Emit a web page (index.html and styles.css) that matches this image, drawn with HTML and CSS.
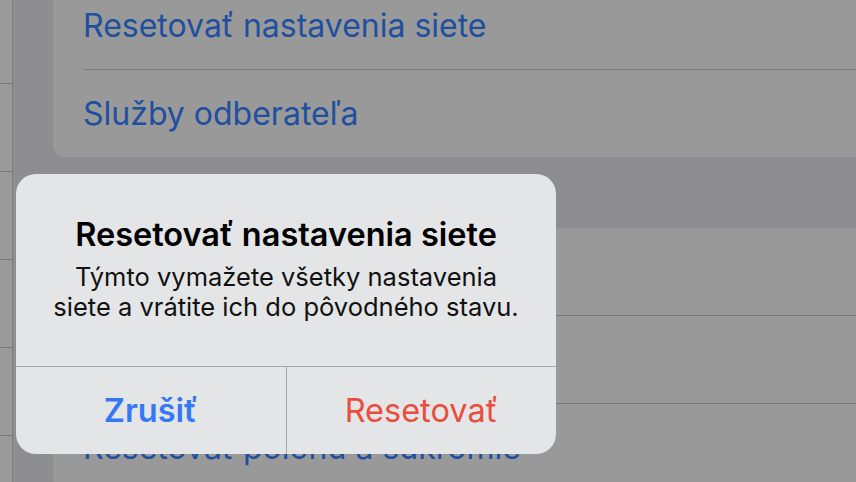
FILE: index.html
```html
<!DOCTYPE html>
<html lang="sk">
<head>
    <meta charset="UTF-8">
    <meta name="viewport" content="width=device-width, initial-scale=1.0">
    <title>Obnoviť</title>
    <link rel="stylesheet" href="styles.css">
</head>
<body>
    <div class="screen">
        <!-- Sidebar edge (split view) -->
        <aside class="sidebar">
            <div class="side-row first"></div>
            <div class="side-row"></div>
            <div class="side-row"></div>
            <div class="side-row"></div>
            <div class="side-row"></div>
            <div class="side-row"></div>
        </aside>

        <!-- Settings list -->
        <main class="settings">
            <section class="group group-top">
                <div class="row">Resetovať nastavenia siete</div>
                <div class="row">Služby odberateľa</div>
            </section>
            <section class="group">
                <!-- rows hidden behind the alert -->
                <div class="row"></div>
                <div class="row"></div>
                <div class="row">Resetovať polohu a súkromie</div>
            </section>
        </main>
    </div>

    <!-- Alert dialog -->
    <div class="alert">
        <div class="alert-body">
            <h2 class="alert-title">Resetovať nastavenia siete</h2>
            <p class="alert-message">Týmto vymažete všetky nastavenia<br>siete a vrátite ich do pôvodného stavu.</p>
        </div>
        <div class="alert-actions">
            <button class="alert-btn cancel">Zrušiť</button>
            <button class="alert-btn destructive">Resetovať</button>
        </div>
    </div>
</body>
</html>
```

FILE: styles.css
```css
html, body {
    margin: 0;
    padding: 0;
}

body {
    font-family: 'Inter', 'Noto Sans', sans-serif;
    background: #8e8d92;
    width: 856px;
    height: 482px;
    overflow: hidden;
    position: relative;
}

.screen {
    display: flex;
    height: 100%;
    overflow: hidden;
}

.sidebar {
    width: 12px;
    flex-shrink: 0;
    background: #9a9a9a;
    border-right: 1px solid #7c7c7c;
}

.side-row {
    height: 87px;
    border-bottom: 1px solid #7c7c7c;
}

.side-row.first {
    margin-top: -4px;
}

.settings {
    flex: 1;
    padding-left: 40px;
    margin-right: -40px;
}

.group {
    background: #999999;
    border-radius: 13px;
    margin-top: 71px;
}

.group-top {
    margin-top: -18px;
}

.row {
    margin-left: 30px;
    height: 87px;
    line-height: 87px;
    font-size: 32px;
    color: #1f4f9f;
    border-bottom: 1px solid #7b7b7b;
    white-space: nowrap;
}

.row:last-child {
    border-bottom: none;
}

.alert {
    position: absolute;
    left: 16px;
    top: 174px;
    width: 540px;
    height: 280px;
    background: #e4e5e7;
    border-radius: 20px;
    display: flex;
    flex-direction: column;
    overflow: hidden;
    text-align: center;
}

.alert-body {
    padding: 41px 10px 0;
    height: 151px;
    border-bottom: 1px solid #a9a9ab;
}

.alert-title {
    margin: 0;
    font-size: 32.5px;
    font-weight: 600;
    line-height: 40px;
    color: #000;
}

.alert-message {
    margin: 7px 0 0;
    font-size: 25.5px;
    line-height: 30px;
    color: #111;
}

.alert-actions {
    flex: 1;
    display: flex;
}

.alert-btn {
    flex: 1;
    border: none;
    background: none;
    font-family: inherit;
    font-size: 32.5px;
    padding: 0;
    margin: 0;
}

.alert-btn.cancel {
    color: #3478f6;
    font-weight: 600;
    border-right: 1px solid #a9a9ab;
}

.alert-btn.destructive {
    color: #eb4d3d;
}
```
